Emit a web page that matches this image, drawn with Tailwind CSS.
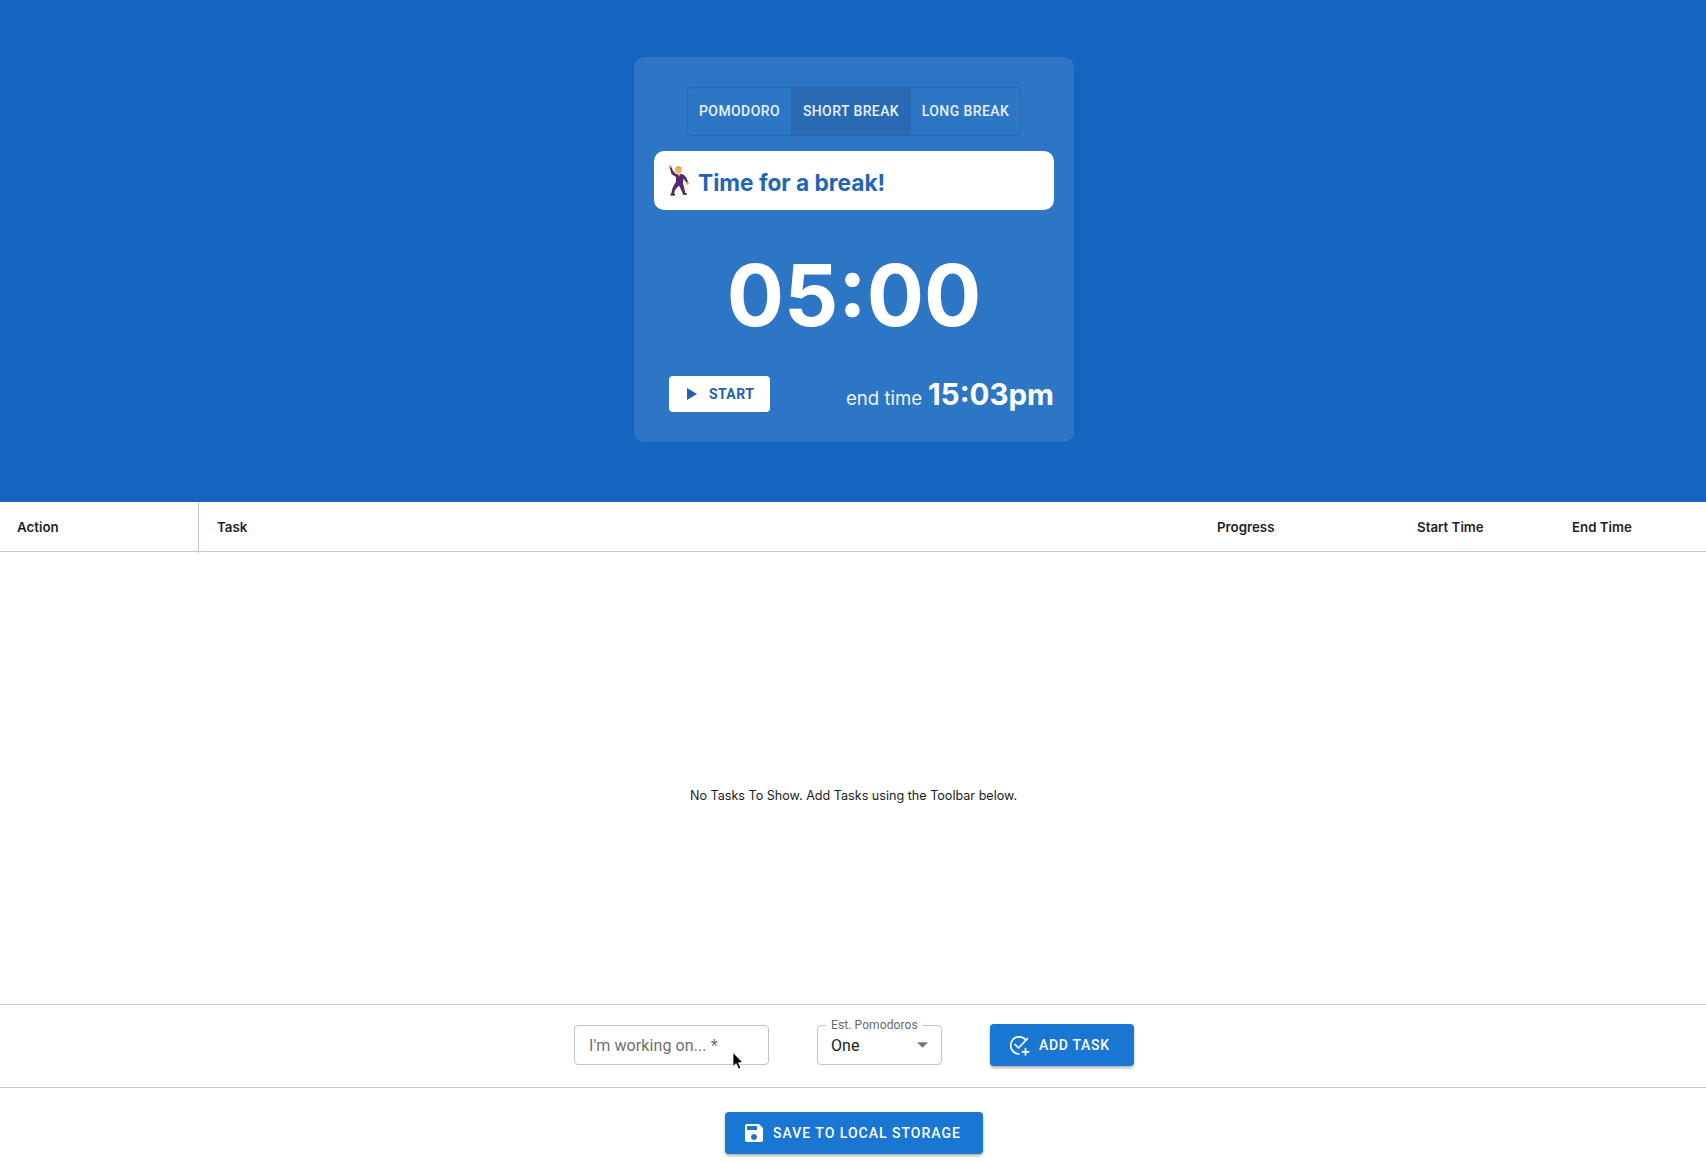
<!DOCTYPE html>
<html><head><meta charset="utf-8"><title>Pomodoro</title>
<script src="https://cdn.jsdelivr.net/npm/@tailwindcss/browser@4"></script></head>
<body class="m-0 bg-white font-['Inter',sans-serif]">
<div class="relative flex flex-col h-[1162px] w-[1706px] overflow-hidden">
  <header class="h-[502px] shrink-0 bg-[#1565c0] flex justify-center pt-[57px] pl-[2px]">
    <section class="w-[440px] h-[385px] rounded-[10px] bg-[#2d76c6] flex flex-col pt-[30px] px-5">
      <div class="self-center flex h-[49px] border border-[#2367b5] rounded-[4px] text-[#e8f0fa] font-['Roboto',sans-serif] font-medium text-[14px] tracking-[0.4px]">
        <div class="w-[103px] flex items-center justify-center">POMODORO</div>
        <div class="w-[120px] flex items-center justify-center bg-[#2a69b3] border-x border-[#2367b5]">SHORT BREAK</div>
        <div class="flex-1 w-[109px] flex items-center justify-center">LONG BREAK</div>
      </div>
      <div class="mt-[15px] h-[59px] bg-white rounded-[10px] flex items-center pl-[14px]">
        <svg class="w-[22px] h-[31px] -mt-[1px]" viewBox="0 0 22 31">
          <path d="M1.5 2 L3 1 L5 6 L8 9 L14 9 C17 10 19 13 20 17 L18.5 18 L15.5 13.5 L15 18 L17.5 28.5 L15 29 L11 20.5 L7 25 L6 29.5 L3 29.5 L4.5 23 L8 16.5 L8 12 L3.5 9Z" fill="#55286f"/>
          <circle cx="10.5" cy="5" r="3.4" fill="#e9b65a"/>
          <path d="M7.2 4.5 C7.5 0 13.5 0 14 4.5 L13 3 L8.5 3Z" fill="#d8a53e"/>
          <path d="M9.5 9 L12.5 9 L11 11.5Z" fill="#e9b65a"/>
          <circle cx="2.2" cy="1.7" r="1.4" fill="#e8a548"/><circle cx="19.5" cy="18.5" r="1.4" fill="#e8a548"/>
          <path d="M2.5 29 H7 V30.5 H2.5Z M14.5 28.5 L18.5 28 L19 29.8 H15Z" fill="#222"/>
        </svg>
        <span class="ml-[8px] mt-[6px] text-[22.7px] leading-none font-bold text-[#1f66b6]">Time for a break!</span>
      </div>
      <div class="mt-[42px] text-center text-white text-[85px] leading-[88px] font-bold">05:00</div>
      <div class="mt-[35px] flex items-center justify-between pl-[15px]">
        <button class="w-[101px] h-[36px] bg-white rounded-[4px] flex items-center pl-[18px] pt-[1px] text-[#1f62ad] font-['Roboto',sans-serif] font-bold text-[14px] tracking-[0.4px]">
          <svg class="w-[10px] h-[12px] mr-[12px]" viewBox="0 0 10 12"><path d="M0 0 L10 6 L0 12Z" fill="#1f62ad"/></svg>START
        </button>
        <div class="text-white flex items-baseline mt-[1px]">
          <span class="text-[18.6px] text-[#eef4fb]">end time</span>
          <span class="ml-[6px] text-[29.5px] leading-[36px] font-bold">15:03pm</span>
        </div>
      </div>
    </section>
  </header>
  <div class="h-[50px] shrink-0 border-b border-[#c3cad3] flex items-center pt-[2px] text-[13.3px] font-semibold text-[#1f1f1f]">
    <div class="w-[199px] -my-[2px] h-[51px] flex items-center pl-[17px] pt-[1px] border-r border-[#bcc8d8]">Action</div>
    <div class="w-[1018px] pl-[18px]">Task</div>
    <div class="w-[200px]">Progress</div>
    <div class="w-[155px]">Start Time</div>
    <div>End Time</div>
  </div>
  <main class="flex-1 flex items-center justify-center pt-[36px] pl-[1px] text-[12.6px] text-[#1c1c1c]">No Tasks To Show. Add Tasks using the Toolbar below.</main>
  <div class="h-[84px] shrink-0 border-y border-[#c3cad3] flex items-center pl-[574px] pb-[2px] font-['Roboto',sans-serif]">
    <div class="w-[195px] h-[40px] border border-[#c4c4c4] rounded-[4px] flex items-center pl-[14px] pt-[2px] text-[16px] text-[#6f6f6f] tracking-[0.1px]">I'm working on... *</div>
    <div class="relative ml-[48px] w-[125px] h-[40px] border border-[#c4c4c4] rounded-[4px] flex items-center pl-[13px] pt-[2px] text-[16px] text-[#1c1c1c] tracking-[0.1px]">One
      <span class="absolute -top-[8px] left-[8px] bg-white px-[5px] text-[12px] leading-[14px] text-[#6a6a6a]">Est. Pomodoros</span>
      <svg class="absolute right-[13px] top-[16px] w-[11px] h-[6px]" viewBox="0 0 10 5"><path d="M0 0 L10 0 L5 5Z" fill="#757575"/></svg>
    </div>
    <button class="ml-[48px] w-[144px] h-[42px] bg-[#1976d2] rounded-[4px] text-white flex items-center pl-[19px] text-[14px] font-medium tracking-[0.7px] shadow-[0_2px_3px_rgba(0,0,0,0.3)]">
      <svg class="w-[21px] h-[21px] mr-[9px]" viewBox="0 0 21 21" fill="none" stroke="white" stroke-width="1.7" stroke-linecap="round" stroke-linejoin="round"><path d="M17 5 A8.6 8.6 0 1 0 10 19"/><path d="M6 9.5 L9.5 13 L18.5 3.5"/><path d="M16.5 13.5 V20 M13.3 16.8 H19.8"/></svg>ADD TASK
    </button>
  </div>
  <div class="h-[74px] shrink-0 flex justify-center pt-[24px] pl-[2px] font-['Roboto',sans-serif]">
    <button class="w-[258px] h-[42px] bg-[#1976d2] rounded-[4px] text-white flex items-center pl-[20px] text-[14px] font-medium tracking-[1px] shadow-[0_2px_3px_rgba(0,0,0,0.3)]">
      <svg class="w-[18px] h-[18px] mr-[10px]" viewBox="3 3 18 18" fill="white"><path d="M17 3H5c-1.11 0-2 .9-2 2v14c0 1.1.89 2 2 2h14c1.1 0 2-.9 2-2V7l-4-4zm-5 16c-1.66 0-3-1.34-3-3s1.34-3 3-3 3 1.34 3 3-1.34 3-3 3zm3-10H5V5h10v4z"/></svg>SAVE TO LOCAL STORAGE
    </button>
  </div>
  <svg class="absolute left-[732px] top-[1052px] w-[12px] h-[18px]" viewBox="0 0 12 18"><path d="M1 0.5 V14.5 L4.2 11.5 L6.5 17 L8.8 16 L6.5 10.8 L10.8 10.5Z" fill="#000" stroke="#fff" stroke-width="0.8"/></svg>
</div>
</body></html>
